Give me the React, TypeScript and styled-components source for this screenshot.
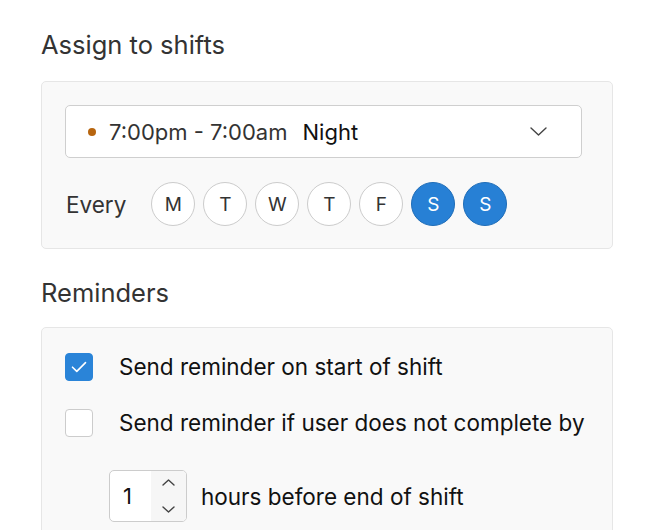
import styled, { createGlobalStyle } from "styled-components";

const GlobalStyle = createGlobalStyle`
  html, body {
    margin: 0;
    padding: 0;
    background: #ffffff;
    font-family: Inter, "Noto Sans", "Liberation Sans", sans-serif;
    color: #333333;
  }
`;

const Page = styled.div`
  padding: 29px 0 0 41px;
  width: 572px;
`;

const SectionTitle = styled.h2<{ $gap?: number }>`
  margin: 0 0 ${(p) => p.$gap ?? 20}px;
  font-size: 25.5px;
  font-weight: 400;
  line-height: 32px;
  color: #333333;
`;

const Panel = styled.div<{ $last?: boolean }>`
  box-sizing: border-box;
  background: #f9f9f9;
  border: 1px solid #e6e6e6;
  border-radius: 5px;
  padding: 23px 30px 22px 23px;
  margin-bottom: ${(p) => (p.$last ? "0" : "28px")};
  display: flex;
  flex-direction: column;
`;

const Select = styled.div`
  box-sizing: border-box;
  height: 53px;
  background: #ffffff;
  border: 1px solid #cfcfcf;
  border-radius: 5px;
  display: flex;
  align-items: center;
  padding: 0 34px 0 22px;
  font-size: 22px;
`;

const Dot = styled.span`
  width: 8px;
  height: 8px;
  border-radius: 50%;
  background: #b7650f;
  margin-right: 13px;
`;

const TimeRange = styled.span`
  color: #333333;
`;

const ShiftName = styled.span`
  color: #111111;
  margin-left: 15px;
  flex: 1;
`;

const DaysRow = styled.div`
  display: flex;
  align-items: center;
  margin-top: 24px;
`;

const EveryLabel = styled.span`
  font-size: 22.5px;
  color: #333333;
  margin: 0 25px 0 1px;
`;

const Days = styled.div`
  display: flex;
  gap: 8px;
`;

const Day = styled.div<{ $on?: boolean }>`
  box-sizing: border-box;
  width: 44px;
  height: 44px;
  border-radius: 50%;
  display: flex;
  align-items: center;
  justify-content: center;
  font-size: 19px;
  background: ${(p) => (p.$on ? "#2780d5" : "#ffffff")};
  color: ${(p) => (p.$on ? "#ffffff" : "#333333")};
  border: 1px solid ${(p) => (p.$on ? "#1f6db8" : "#cccccc")};
`;

const ReminderPanel = styled(Panel)`
  padding-top: 25px;
  padding-bottom: 40px;
`;

const CheckRow = styled.label`
  display: flex;
  align-items: center;
  gap: 26px;
  font-size: 22.5px;
  line-height: 28px;
  color: #111111;
  height: 28px;
  white-space: nowrap;
  & + & {
    margin-top: 28px;
  }
`;

const Box = styled.span<{ $checked?: boolean }>`
  box-sizing: border-box;
  flex: none;
  width: 28px;
  height: 28px;
  border-radius: 4px;
  display: flex;
  align-items: center;
  justify-content: center;
  background: ${(p) => (p.$checked ? "#2a84d8" : "#ffffff")};
  border: 1px solid ${(p) => (p.$checked ? "#2a84d8" : "#cccccc")};
`;

const HoursRow = styled.div`
  display: flex;
  align-items: center;
  gap: 14px;
  margin: 33px 0 0 44px;
  font-size: 22.5px;
  color: #111111;
  white-space: nowrap;
`;

const NumberBox = styled.div`
  box-sizing: border-box;
  width: 78px;
  height: 52px;
  border: 1px solid #cccccc;
  border-radius: 5px;
  background: #ffffff;
  display: flex;
  overflow: hidden;
`;

const NumberValue = styled.span`
  flex: 1;
  display: flex;
  align-items: center;
  padding-left: 13px;
  font-size: 22px;
  color: #111111;
`;

const Spinner = styled.div`
  width: 35px;
  background: #f6f6f6;
  display: flex;
  flex-direction: column;
  align-items: center;
  justify-content: center;
  gap: 20px;
`;

const Chevron = ({ up, w = 17, h = 9 }: { up?: boolean; w?: number; h?: number }) => (
  <svg width={w} height={h} viewBox={`0 0 ${w} ${h}`} fill="none">
    <path
      d={up ? `M1 ${h - 1} L${w / 2} 1 L${w - 1} ${h - 1}` : `M1 1 L${w / 2} ${h - 1} L${w - 1} 1`}
      stroke="#444444"
      strokeWidth="1.4"
      strokeLinecap="round"
      strokeLinejoin="round"
    />
  </svg>
);

const Check = () => (
  <svg width="16" height="12" viewBox="0 0 16 12" fill="none">
    <path d="M1.5 6.2 L5.8 10.4 L14.5 1.6" stroke="#ffffff" strokeWidth="1.6" strokeLinecap="round" strokeLinejoin="round" />
  </svg>
);

const days = [
  { label: "M", on: false },
  { label: "T", on: false },
  { label: "W", on: false },
  { label: "T", on: false },
  { label: "F", on: false },
  { label: "S", on: true },
  { label: "S", on: true },
];

export default function App() {
  return (
    <>
      <GlobalStyle />
      <Page>
        <SectionTitle $gap={20}>Assign to shifts</SectionTitle>
        <Panel>
          <Select>
            <Dot />
            <TimeRange>7:00pm - 7:00am</TimeRange>
            <ShiftName>Night</ShiftName>
            <Chevron />
          </Select>
          <DaysRow>
            <EveryLabel>Every</EveryLabel>
            <Days>
              {days.map((d, i) => (
                <Day key={i} $on={d.on}>
                  {d.label}
                </Day>
              ))}
            </Days>
          </DaysRow>
        </Panel>

        <SectionTitle $gap={18}>Reminders</SectionTitle>
        <ReminderPanel $last>
          <CheckRow>
            <Box $checked>
              <Check />
            </Box>
            Send reminder on start of shift
          </CheckRow>
          <CheckRow>
            <Box />
            Send reminder if user does not complete by
          </CheckRow>
          <HoursRow>
            <NumberBox>
              <NumberValue>1</NumberValue>
              <Spinner>
                <Chevron up w={13} h={7} />
                <Chevron w={13} h={7} />
              </Spinner>
            </NumberBox>
            hours before end of shift
          </HoursRow>
        </ReminderPanel>
      </Page>
    </>
  );
}
